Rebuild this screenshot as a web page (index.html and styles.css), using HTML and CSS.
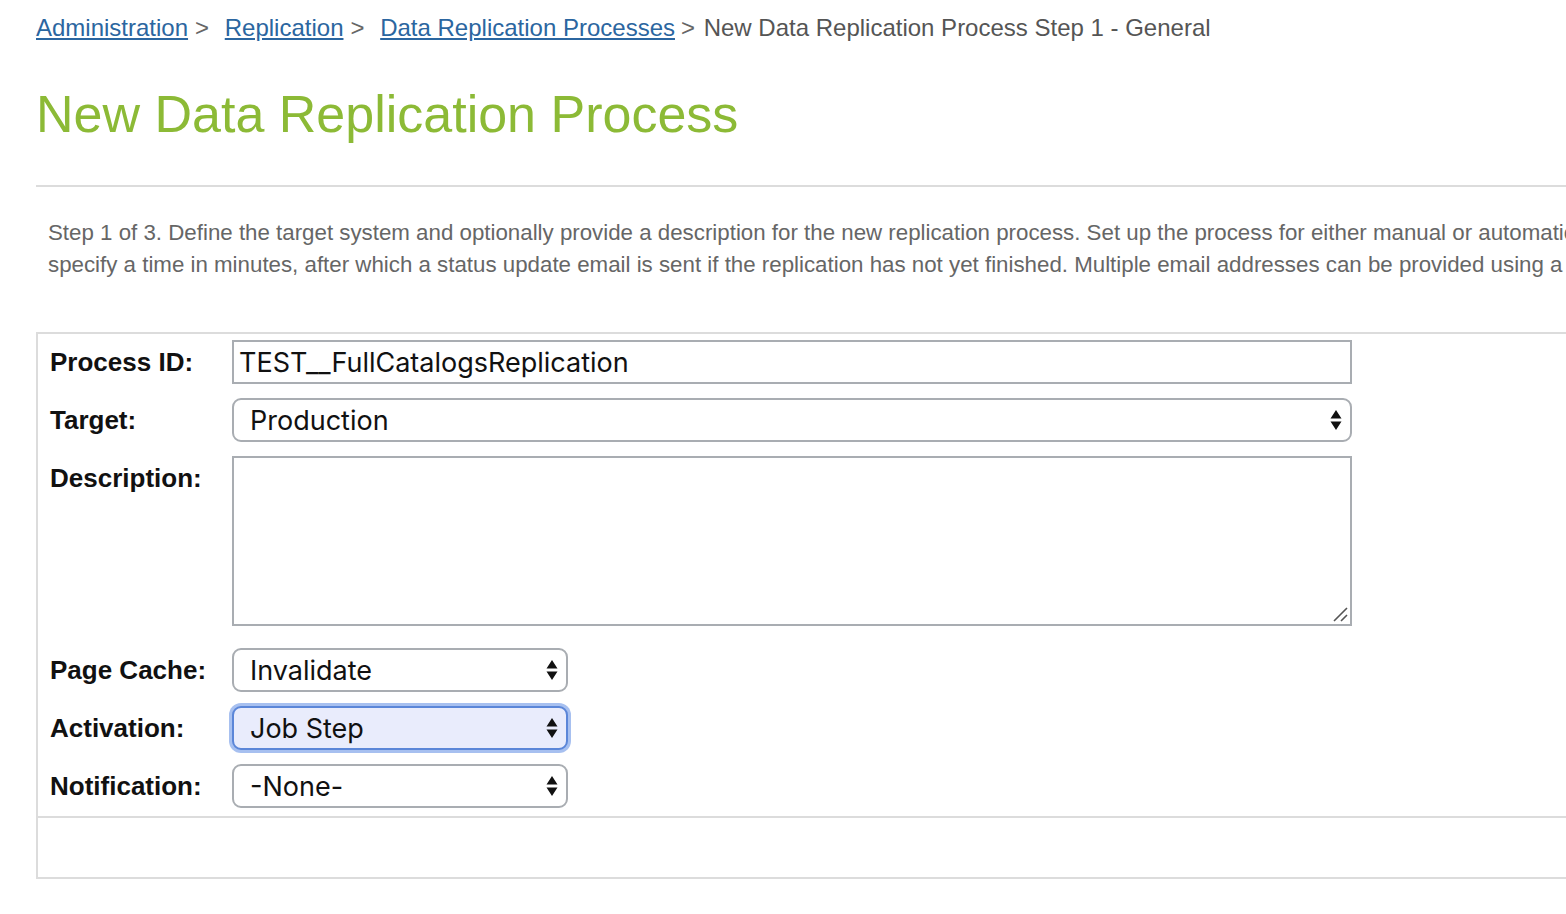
FILE: index.html
```html
<!DOCTYPE html>
<html>
<head>
<meta charset="utf-8">
<link rel="stylesheet" href="styles.css">
</head>
<body>
<div class="page">
  <nav class="crumbs">
    <a href="#">Administration</a><span class="sep">&gt;</span>
    <a href="#">Replication</a><span class="sep">&gt;</span>
    <a href="#">Data Replication Processes</a><span class="sep sep-last">&gt;</span>
    <span class="current">New Data Replication Process Step 1 - General</span>
  </nav>
  <h1 class="title">New Data Replication Process</h1>
  <div class="rule"></div>
  <p class="intro">Step 1 of 3. Define the target system and optionally provide a description for the new replication process. Set up the process for either manual or automatic execution. For the notification,<br>specify a time in minutes, after which a status update email is sent if the replication has not yet finished. Multiple email addresses can be provided using a comma as separator.</p>

  <div class="formbox">
    <div class="rows">
      <div class="row">
        <label class="lbl">Process ID:</label>
        <div class="field input wide">TEST__FullCatalogsReplication</div>
      </div>
      <div class="row">
        <label class="lbl">Target:</label>
        <div class="field select wide"><span>Production</span><svg class="arr" width="12" height="22" viewBox="0 0 12 22"><path d="M6 1 L11.5 9.5 H0.5 Z M6 21 L11.5 12.5 H0.5 Z" fill="#111"/></svg></div>
      </div>
      <div class="row row-ta">
        <label class="lbl">Description:</label>
        <div class="field textarea wide"><svg class="grip" width="18" height="18" viewBox="0 0 18 18"><path d="M3 16 L16 3 M10 16 L16 10" stroke="#555" stroke-width="1.6"/></svg></div>
      </div>
      <div class="row">
        <label class="lbl">Page Cache:</label>
        <div class="field select narrow"><span>Invalidate</span><svg class="arr" width="12" height="22" viewBox="0 0 12 22"><path d="M6 1 L11.5 9.5 H0.5 Z M6 21 L11.5 12.5 H0.5 Z" fill="#111"/></svg></div>
      </div>
      <div class="row">
        <label class="lbl">Activation:</label>
        <div class="field select narrow focused"><span>Job Step</span><svg class="arr" width="12" height="22" viewBox="0 0 12 22"><path d="M6 1 L11.5 9.5 H0.5 Z M6 21 L11.5 12.5 H0.5 Z" fill="#111"/></svg></div>
      </div>
      <div class="row">
        <label class="lbl">Notification:</label>
        <div class="field select narrow"><span>-None-</span><svg class="arr" width="12" height="22" viewBox="0 0 12 22"><path d="M6 1 L11.5 9.5 H0.5 Z M6 21 L11.5 12.5 H0.5 Z" fill="#111"/></svg></div>
      </div>
    </div>
    <div class="footer"></div>
  </div>
</div>
</body>
</html>
```

FILE: styles.css
```css
html, body {
  margin: 0;
  padding: 0;
  overflow: hidden;
  background: #fff;
}
body {
  font-family: "Liberation Sans", Arial, sans-serif;
}
.page {
  width: 1900px;
  padding-left: 36px;
}
.crumbs {
  font-size: 24px;
  line-height: 28px;
  padding-top: 14px;
  color: #666;
  white-space: nowrap;
}
.crumbs a {
  color: #2b66a0;
  text-decoration: underline;
}
.crumbs .sep {
  margin: 0 9px 0 7px;
  color: #666;
}
.crumbs .sep-last {
  margin: 0 2px 0 6px;
}
.crumbs .current {
  color: #555;
}
.title {
  margin: 42px 0 0 0;
  font-size: 52px;
  font-weight: normal;
  line-height: 60px;
  color: #8cba36;
}
.rule {
  margin-top: 41px;
  height: 2px;
  background: #dcdcdc;
}
.intro {
  margin: 30px 0 0 12px;
  font-size: 22.3px;
  line-height: 32px;
  color: #666;
  white-space: nowrap;
}
.formbox {
  margin-top: 51px;
  border: 2px solid #dcdcdc;
  border-right: none;
}
.rows {
  padding: 6px 0 8px 12px;
  display: flex;
  flex-direction: column;
  gap: 14px;
}
.row {
  display: flex;
  align-items: flex-start;
}
.row-ta {
  margin-bottom: 8px;
}
.lbl {
  width: 182px;
  flex: none;
  font-weight: bold;
  font-size: 26px;
  line-height: 44px;
  color: #111;
}
.field {
  box-sizing: border-box;
  height: 44px;
  display: flex;
  align-items: center;
  font-family: Inter, "Noto Sans", sans-serif;
  font-size: 27px;
  color: #111;
  background: #fff;
}
.wide { width: 1120px; }
.narrow { width: 336px; }
.input {
  border: 2px solid #a9adb2;
  padding-left: 5px;
}
.select {
  border: 2px solid #a9adb2;
  border-radius: 9px;
  padding: 0 8px 0 16px;
  justify-content: space-between;
}
.select .arr {
  flex: none;
}
.focused {
  background: #e9ecfc;
  border-color: #5b86d8;
  box-shadow: 0 0 0 3px #a7c0f0;
}
.textarea {
  height: 170px;
  border: 2px solid #a9adb2;
  position: relative;
}
.grip {
  position: absolute;
  right: 1px;
  bottom: 1px;
}
.footer {
  height: 59px;
  border-top: 2px solid #dcdcdc;
}
```
